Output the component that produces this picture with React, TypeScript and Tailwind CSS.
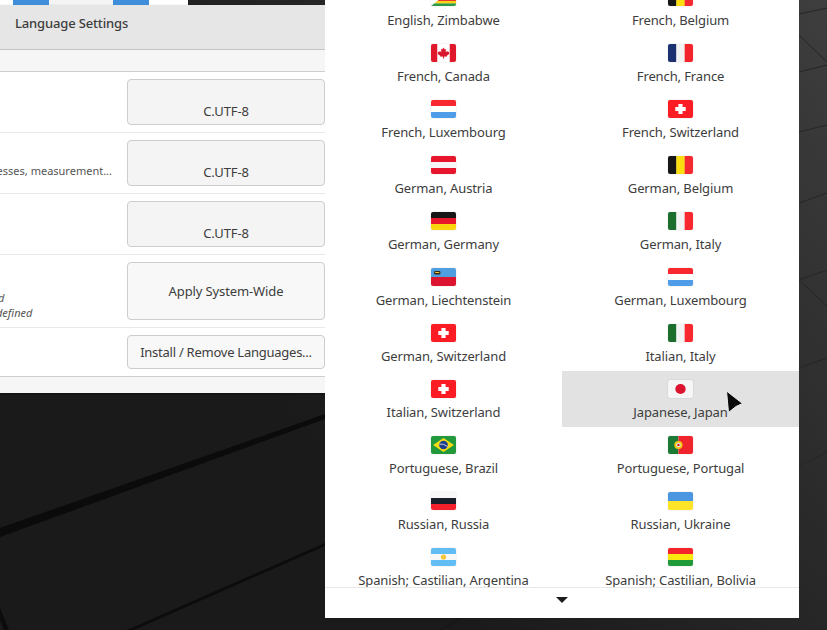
import type { ReactNode } from 'react';

const hBars = (colors: string[]) =>
  colors.map((c, i) => (
    <rect key={i} x="0" y={(i * 18) / colors.length} width="24" height={18 / colors.length + 0.2} fill={c} />
  ));

const vBars = (colors: string[]) =>
  colors.map((c, i) => (
    <rect key={i} x={(i * 24) / colors.length} y="0" width={24 / colors.length + 0.2} height="18" fill={c} />
  ));

const swiss = (
  <>
    <rect width="24" height="18" fill="#fc1c24" />
    <rect x="10" y="4" width="4" height="10" fill="#fff" />
    <rect x="7" y="7" width="10" height="4" fill="#fff" />
  </>
);
const lux = hBars(['#f8282e', '#ffffff', '#4f9de8']);
const italy = vBars(['#1c6e2c', '#f3f3f3', '#f8282e']);
const belgium = vBars(['#161616', '#fbdd10', '#f42a30']);

const flags: Record<string, ReactNode> = {
  zw: (
    <>
      {hBars(['#2a9a4a', '#fdd116', '#e0242c', '#1a1a1a', '#e0242c', '#fdd116', '#2a9a4a'])}
      <path d="M0 0 L11 9 L0 18Z" fill="#fff" />
    </>
  ),
  be: belgium,
  ca: (
    <>
      <rect width="24" height="18" fill="#fff" />
      <rect width="6" height="18" fill="#e0182c" />
      <rect x="18" width="6" height="18" fill="#e0182c" />
      <path d="M12 3.5l1.2 2 1.3-.6-.5 3 1.6-1 .5 1 1.6-.2-.6 1.6.7.5-2.6 2-.3 1-2.4-.4.1 2.2h-1.2l.1-2.2-2.4.4-.3-1-2.6-2 .7-.5-.6-1.6 1.6.2.5-1 1.6 1-.5-3 1.3.6z" fill="#d8182c" />
    </>
  ),
  fr: vBars(['#1c3270', '#f3f3f3', '#f4242c']),
  lu: lux,
  ch: swiss,
  at: hBars(['#e8162c', '#f6f6f6', '#e8162c']),
  de: hBars(['#161616', '#e8182c', '#fbd60e']),
  it: italy,
  li: (
    <>
      <rect width="24" height="9" fill="#4e9ee0" />
      <rect y="9" width="24" height="9" fill="#dc1430" />
      <rect x="3" y="3" width="6" height="3.5" rx="1" fill="#3a2a10" />
      <rect x="4" y="4" width="4" height="1" fill="#f0c040" />
    </>
  ),
  jp: (
    <>
      <rect width="24" height="18" fill="#f6f6f6" />
      <circle cx="12" cy="9" r="5" fill="#dc1430" />
    </>
  ),
  br: (
    <>
      <rect width="24" height="18" fill="#229a3c" />
      <path d="M12 2 L22 9 L12 16 L2 9Z" fill="#f8dc14" />
      <circle cx="12" cy="9" r="4.2" fill="#1f3f8c" />
      <path d="M8 8 Q12 7.5 16 10.5" stroke="#e8e8e8" strokeWidth="0.8" fill="none" />
    </>
  ),
  pt: (
    <>
      <rect width="10" height="18" fill="#1c7a34" />
      <rect x="10" width="14" height="18" fill="#f0242c" />
      <circle cx="10" cy="9" r="4" fill="#f0c814" />
      <circle cx="10" cy="9" r="2.2" fill="#e8e8e8" />
      <circle cx="10" cy="9" r="1.2" fill="#d02028" />
    </>
  ),
  ru: hBars(['#f8f8f8', '#1a1f2a', '#f4202c']),
  ua: hBars(['#4b96e0', '#fde428']),
  ar: (
    <>
      {hBars(['#62bdf4', '#f8f8f8', '#62bdf4'])}
      <circle cx="12" cy="9" r="2.6" fill="#f4c63a" />
    </>
  ),
  bo: hBars(['#f4242c', '#fbe80e', '#1f9a38']),
};

const locales: [string, string][] = [
  ['English, Zimbabwe', 'zw'],
  ['French, Belgium', 'be'],
  ['French, Canada', 'ca'],
  ['French, France', 'fr'],
  ['French, Luxembourg', 'lu'],
  ['French, Switzerland', 'ch'],
  ['German, Austria', 'at'],
  ['German, Belgium', 'be'],
  ['German, Germany', 'de'],
  ['German, Italy', 'it'],
  ['German, Liechtenstein', 'li'],
  ['German, Luxembourg', 'lu'],
  ['German, Switzerland', 'ch'],
  ['Italian, Italy', 'it'],
  ['Italian, Switzerland', 'ch'],
  ['Japanese, Japan', 'jp'],
  ['Portuguese, Brazil', 'br'],
  ['Portuguese, Portugal', 'pt'],
  ['Russian, Russia', 'ru'],
  ['Russian, Ukraine', 'ua'],
  ['Spanish; Castilian, Argentina', 'ar'],
  ['Spanish; Castilian, Bolivia', 'bo'],
];

function LocaleCell({ name, flag }: { name: string; flag: string }) {
  const hover = name === 'Japanese, Japan';
  return (
    <div className={`flex h-[56px] flex-col items-center pt-[9px] ${hover ? 'bg-[#e2e2e2]' : ''}`}>
      <svg width="25" height="18" viewBox="0 0 24 18" preserveAspectRatio="none" className="rounded-[2px] shadow-[0_0_1px_rgba(0,0,0,0.35)]">
        {flags[flag]}
      </svg>
      <span className="mt-[5px] whitespace-nowrap text-[13px] leading-[18px] tracking-[-0.12px] text-[#3d3d3d]">{name}</span>
    </div>
  );
}

function FormRow({ children, button, last }: { children?: ReactNode; button: ReactNode; last?: boolean }) {
  return (
    <div className={`flex bg-white py-[7px] ${last ? 'border-b border-[#cfcfcf]' : 'border-b border-[#e9e9e9]'}`}>
      <div className="flex w-[127px] items-center justify-end overflow-hidden pr-[15px]">{children}</div>
      {button}
    </div>
  );
}

function LocaleButton() {
  return (
    <div className="flex h-[46px] w-[198px] items-end justify-center rounded-[4px] border border-[#cdcdcd] bg-[#f4f4f4] pb-[4px] text-[13px] leading-[18px] tracking-[-0.12px] text-[#3d3d3d]">
      C.UTF-8
    </div>
  );
}

export default function App() {
  return (
    <div
      className="relative h-[630px] w-[827px] overflow-hidden bg-[linear-gradient(52deg,#1a1a1b_35%,#262626_62%,#3e3e3e_100%)] text-[#3d3d3d]"
      style={{ fontFamily: '"Noto Sans", "Liberation Sans", sans-serif' }}
    >
      {/* wallpaper creases */}
      <svg className="absolute inset-0" width="827" height="630" viewBox="0 0 827 630" fill="none">
        <path d="M0 528 L325 414 L325 419 L0 537Z" fill="#0b0b0b" />
        <path d="M127 630 L325 543 L325 546 L134 630Z" fill="#0c0c0c" />
        <path d="M0 608 L9 630 L4 630 L0 620Z" fill="#0c0c0c" />
        <path d="M440 630 L462 618" stroke="#151515" />
        <g stroke="#262626" strokeWidth="1">
          <path d="M799 14 L827 8" />
          <path d="M799 72 L827 65" />
          <path d="M799 132 L827 125" />
          <path d="M799 203 L827 193" />
          <path d="M799 280 L827 270" />
          <path d="M799 368 L827 358" />
          <path d="M799 466 L827 452" />
          <path d="M799 35 L827 62" />
          <path d="M799 280 L827 306" />
        </g>
      </svg>

      {/* window peeking out behind the settings dialog */}
      <div className="absolute left-0 top-0 flex h-[5px] w-[188px] bg-white">
        <div className="ml-[13px] w-[36px] bg-[#3f8edc]" />
        <div className="w-[64px] bg-[#f4f4f4]" />
        <div className="w-[36px] bg-[#3f8edc]" />
      </div>

      {/* Language Settings window */}
      <div className="absolute left-0 top-[5px] w-[325px] bg-[#f6f6f6] shadow-[0_1px_2px_rgba(0,0,0,0.4)]">
        <div className="flex h-[45px] items-center border-b border-[#c4c4c4] bg-[#e6e6e6] pb-[6px] pl-[15px] text-[13px] font-medium tracking-[-0.15px] text-[#3d3d3d]">
          Language Settings
        </div>
        <div className="h-[22px] border-b border-[#cfcfcf]" />
        <FormRow button={<LocaleButton />} />
        <FormRow button={<LocaleButton />}>
          <span className="mt-[16px] whitespace-nowrap text-[11px] text-[#555]">Numbers, currency, addresses, measurement...</span>
        </FormRow>
        <FormRow button={<LocaleButton />} />
        <FormRow
          button={
            <div className="flex h-[58px] w-[198px] items-center justify-center rounded-[4px] border border-[#cdcdcd] bg-[#f8f8f8] pt-[2px] text-[13px] tracking-[-0.12px]">
              Apply System-Wide
            </div>
          }
        >
          <div className="mr-[-15px] flex w-[127px] flex-col items-start overflow-hidden pt-[28px] text-[11px] italic leading-[15px] text-[#555]">
            <span className="ml-[-2px]">d</span>
            <span className="ml-[-4px]">defined</span>
          </div>
        </FormRow>
        <FormRow
          last
          button={
            <div className="flex h-[34px] w-[198px] items-center justify-center rounded-[4px] border border-[#cdcdcd] bg-[#f8f8f8] pt-[2px] text-[13px] tracking-[-0.25px]">
              Install / Remove Languages...
            </div>
          }
        />
        <div className="h-[16px]" />
      </div>

      {/* locale picker */}
      <div className="absolute left-[325px] top-0 flex h-[618px] w-[474px] flex-col bg-white">
        <div className="h-[587px] overflow-hidden">
          <div className="mt-[-21px] grid grid-cols-2">
            {locales.map(([name, flag]) => (
              <LocaleCell key={name} name={name} flag={flag} />
            ))}
          </div>
        </div>
        <div className="flex flex-1 items-center justify-center border-t border-[#e8e8e8] pb-[6px]">
          <svg width="12" height="6" viewBox="0 0 12 6">
            <path d="M0 0 H12 L6 6Z" fill="#1c1c1c" />
          </svg>
        </div>
      </div>

      {/* mouse pointer */}
      <svg className="absolute left-[722px] top-[387px]" width="26" height="30" viewBox="0 0 26 30">
        <path d="M4.5 4 L20.5 16.5 L14 19.5 L6.5 25.5Z" fill="#0a0a0a" stroke="#ececec" strokeWidth="1" strokeLinejoin="round" />
      </svg>
    </div>
  );
}
